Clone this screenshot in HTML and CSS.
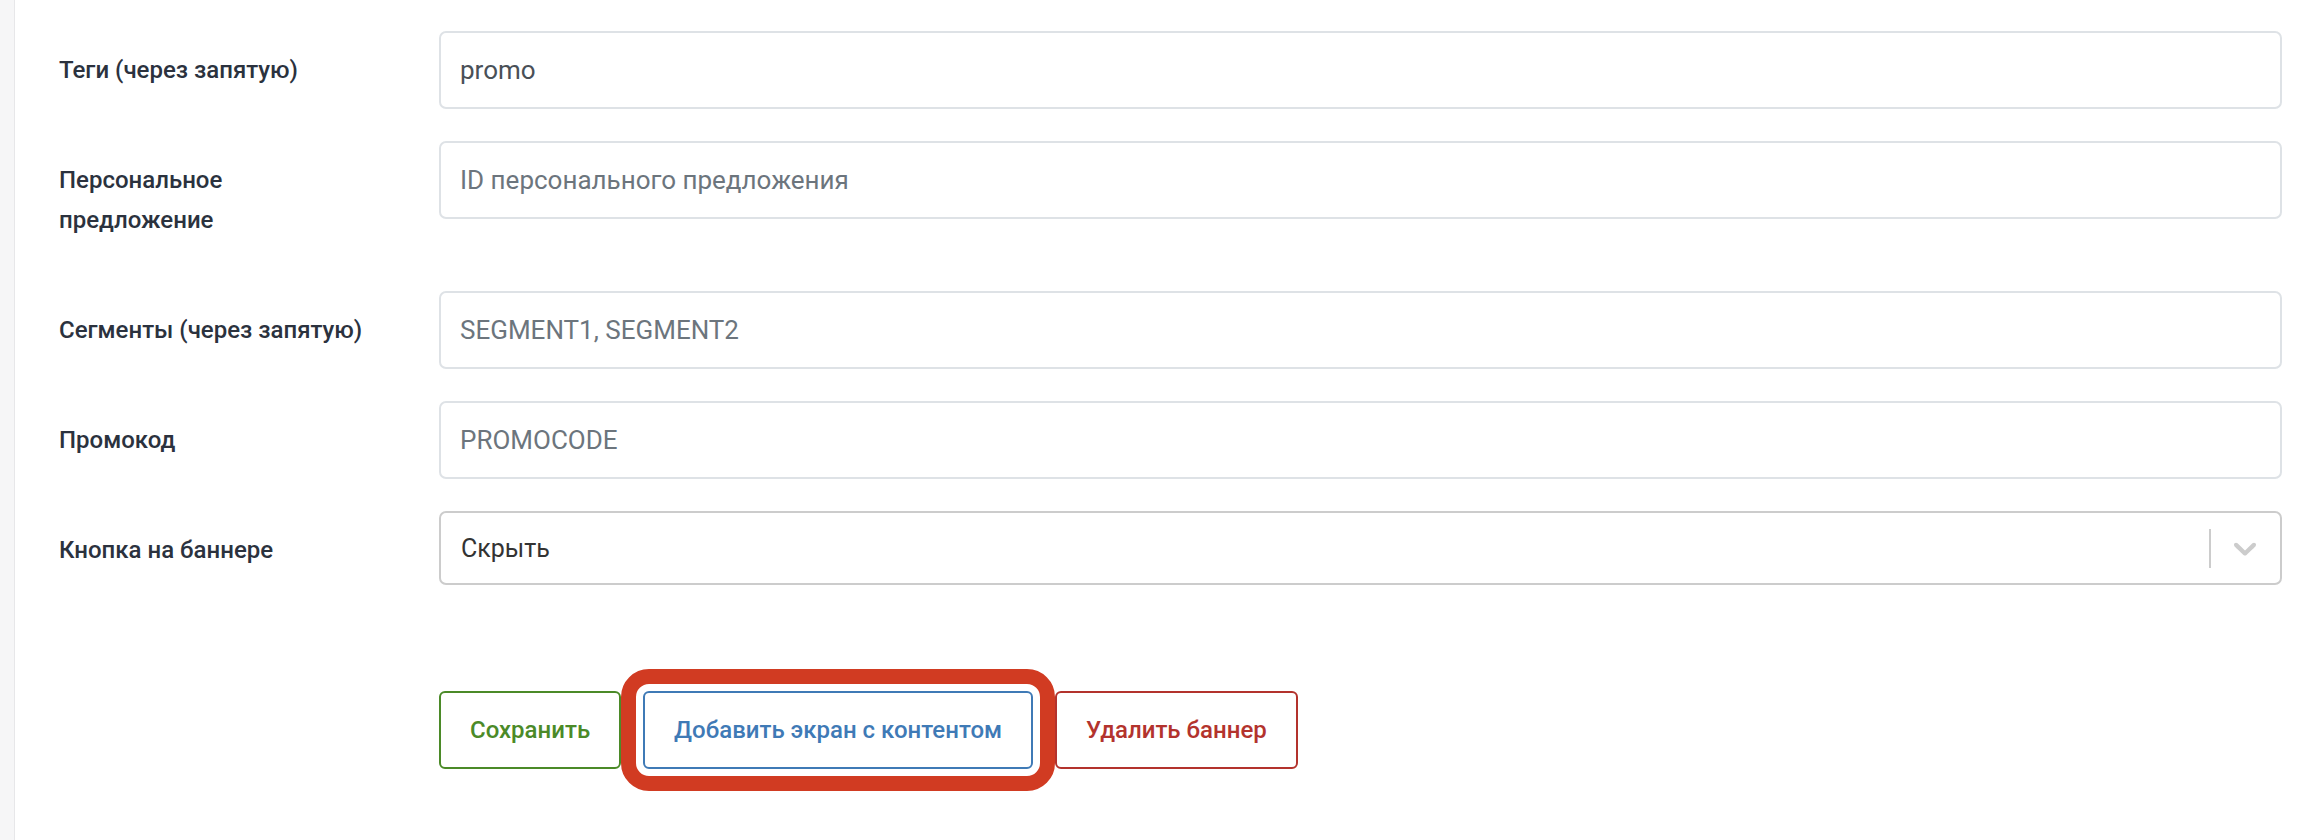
FILE: index.html
```html
<!DOCTYPE html>
<html lang="ru">
<head>
<meta charset="utf-8">
<title>Баннер</title>
<link rel="stylesheet" href="styles.css">
</head>
<body>
<div class="page">
  <aside class="strip"></aside>
  <main class="content">
    <form class="form">
      <div class="row">
        <label class="label">Теги (через запятую)</label>
        <input class="field" type="text" value="promo">
      </div>
      <div class="row">
        <label class="label">Персональное<br>предложение</label>
        <input class="field" type="text" placeholder="ID персонального предложения">
      </div>
      <div class="row">
        <label class="label">Сегменты (через запятую)</label>
        <input class="field" type="text" placeholder="SEGMENT1, SEGMENT2">
      </div>
      <div class="row">
        <label class="label">Промокод</label>
        <input class="field" type="text" placeholder="PROMOCODE">
      </div>
      <div class="row">
        <label class="label">Кнопка на баннере</label>
        <div class="select">
          <span class="select-value">Скрыть</span>
          <span class="select-sep"></span>
          <span class="select-ind">
            <svg viewBox="0 0 20 20" width="38" height="38" aria-hidden="true"><path fill="#cccccc" d="M4.516 7.548c0.436-0.446 1.043-0.481 1.576 0l3.908 3.747 3.908-3.747c0.533-0.481 1.141-0.446 1.574 0 0.436 0.445 0.408 1.197 0 1.615-0.406 0.418-4.695 4.502-4.695 4.502-0.217 0.223-0.502 0.335-0.787 0.335s-0.57-0.112-0.789-0.335c0 0-4.287-4.084-4.695-4.502s-0.436-1.17 0-1.615z"/></svg>
          </span>
        </div>
      </div>
      <div class="actions">
        <button type="button" class="btn btn-save">Сохранить</button>
        <button type="button" class="btn btn-add">Добавить экран с контентом</button>
        <button type="button" class="btn btn-del">Удалить баннер</button>
      </div>
    </form>
  </main>
</div>
</body>
</html>
```
FILE: styles.css
```css
* { box-sizing: border-box; }
html, body { margin: 0; padding: 0; background: #ffffff; }
body {
  font-family: Roboto, "Noto Sans", "Liberation Sans", sans-serif;
  color: #2d3440;
}
.page {
  display: flex;
  min-height: 840px;
}
.strip {
  width: 15px;
  flex: 0 0 15px;
  background: #f6f6f7;
  border-right: 1px solid #e7e7e9;
}
.content {
  flex: 1;
  padding: 31px 28px 0 44px;
}
.row {
  display: grid;
  grid-template-columns: 380px 1fr;
  margin-bottom: 32px;
  align-items: start;
}
.label {
  font-size: 24px;
  font-weight: 500;
  line-height: 40px;
  padding: 19px 0;
  color: #2b323e;
}
.field {
  height: 78px;
  width: 100%;
  border: 2px solid #dee2e6;
  border-radius: 7px;
  padding: 0 19px;
  font-family: Roboto, "Noto Sans", sans-serif;
  font-size: 26px;
  color: #495057;
  background: #fff;
  outline: none;
}
.field::placeholder { color: #6c757d; opacity: 1; }
.select {
  height: 74px;
  border: 2px solid #cccccc;
  border-radius: 7px;
  display: flex;
  align-items: center;
  background: #fff;
}
.select-value {
  flex: 1;
  padding-left: 20px;
  font-size: 25px;
  color: #333333;
}
.select-sep {
  width: 2px;
  height: 39px;
  background: #cccccc;
}
.select-ind {
  display: flex;
  align-items: center;
  padding: 0 16px 0 15px;
}
.actions {
  display: flex;
  gap: 22px;
  margin-top: 102px;
  padding-left: 380px;
}
.btn {
  height: 78px;
  padding: 0 29px;
  border: 2px solid;
  border-radius: 6px;
  background: transparent;
  font-family: Roboto, "Noto Sans", sans-serif;
  font-size: 24px;
  font-weight: 500;
  cursor: pointer;
}
.btn-save { color: #4b8a28; border-color: #4b8a28; }
.btn-add {
  color: #3f7ab6;
  border-color: #3f7ab6;
  outline: 15px solid #d13b22;
  outline-offset: 7px;
}
.btn-del { color: #b3332d; border-color: #b3332d; }
```
